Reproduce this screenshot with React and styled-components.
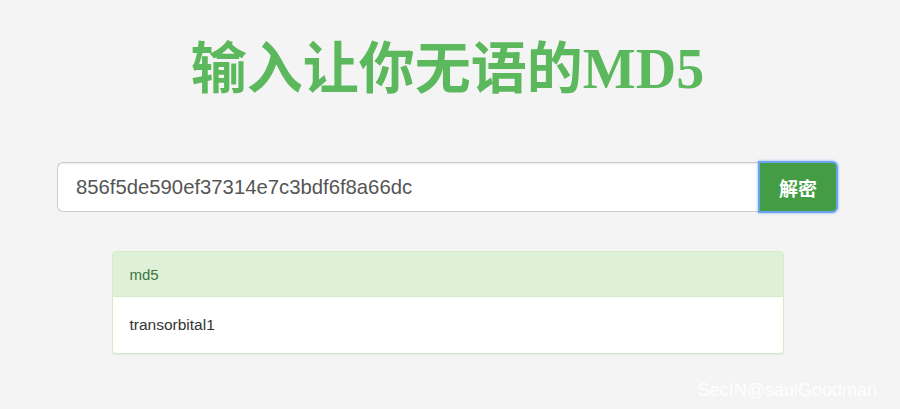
import React from "react";
import styled, { createGlobalStyle } from "styled-components";

const GlobalStyle = createGlobalStyle`
  html, body {
    margin: 0;
    padding: 0;
    background: #f4f4f4;
  }
  body {
    font-family: "Liberation Sans", Arial, "Noto Sans CJK SC", sans-serif;
  }
`;

const Page = styled.div`
  position: relative;
  width: 895px;
  height: 409px;
  display: flex;
  flex-direction: column;
  align-items: center;
  overflow: hidden;
`;

const Title = styled.h1`
  margin: 34px 0 0;
  height: 70px;
  line-height: 70px;
  font-family: "Liberation Serif", "Noto Sans CJK SC", serif;
  font-size: 56px;
  font-weight: bold;
  color: #5cb85c;
`;

const InputGroup = styled.form`
  margin-top: 58px;
  width: 781px;
  display: flex;
  align-items: stretch;
`;

const HashInput = styled.input`
  flex: 1;
  height: 50px;
  box-sizing: border-box;
  padding: 0 18px;
  border: 1px solid #cccccc;
  border-right: none;
  border-radius: 6px 0 0 6px;
  background: #ffffff;
  font-family: "Liberation Sans", Arial, sans-serif;
  font-size: 20.3px;
  color: #555555;
  outline: none;
  box-shadow: inset 0 1px 1px rgba(0, 0, 0, 0.075);
`;

const SubmitButton = styled.button`
  width: 80px;
  height: 52px;
  margin-top: -1px;
  box-sizing: border-box;
  border: 2px solid #6aa2ef;
  border-radius: 0 6px 6px 0;
  background: #449d44;
  color: #ffffff;
  font-family: "Noto Sans CJK SC", sans-serif;
  font-size: 19px;
  font-weight: bold;
  box-shadow: 0 0 3px rgba(102, 160, 240, 0.8);
  cursor: pointer;
`;

const Panel = styled.section`
  margin-top: 38px;
  width: 672px;
  box-sizing: border-box;
  border: 1px solid #d6e9c6;
  border-radius: 4px;
  background: #ffffff;
  box-shadow: 0 1px 1px rgba(0, 0, 0, 0.05);
  overflow: hidden;
`;

const PanelHeading = styled.div`
  height: 44px;
  padding: 0 17px;
  display: flex;
  align-items: center;
  background: #dff0d8;
  border-bottom: 1px solid #d6e9c6;
  color: #3c763d;
  font-size: 15px;
`;

const PanelBody = styled.div`
  height: 56px;
  padding: 0 17px;
  display: flex;
  align-items: center;
  color: #333333;
  font-size: 15.5px;
`;

const Watermark = styled.span`
  position: absolute;
  right: 18px;
  bottom: 8px;
  color: rgba(255, 255, 255, 0.95);
  font-family: "Liberation Sans", Arial, sans-serif;
  font-size: 18px;
`;

export default function App() {
  return (
    <>
      <GlobalStyle />
      <Page>
        <Title>输入让你无语的MD5</Title>
        <InputGroup onSubmit={(e) => e.preventDefault()}>
          <HashInput defaultValue="856f5de590ef37314e7c3bdf6f8a66dc" />
          <SubmitButton type="submit">解密</SubmitButton>
        </InputGroup>
        <Panel>
          <PanelHeading>md5</PanelHeading>
          <PanelBody>transorbital1</PanelBody>
        </Panel>
        <Watermark>SecIN@saulGoodman</Watermark>
      </Page>
    </>
  );
}
